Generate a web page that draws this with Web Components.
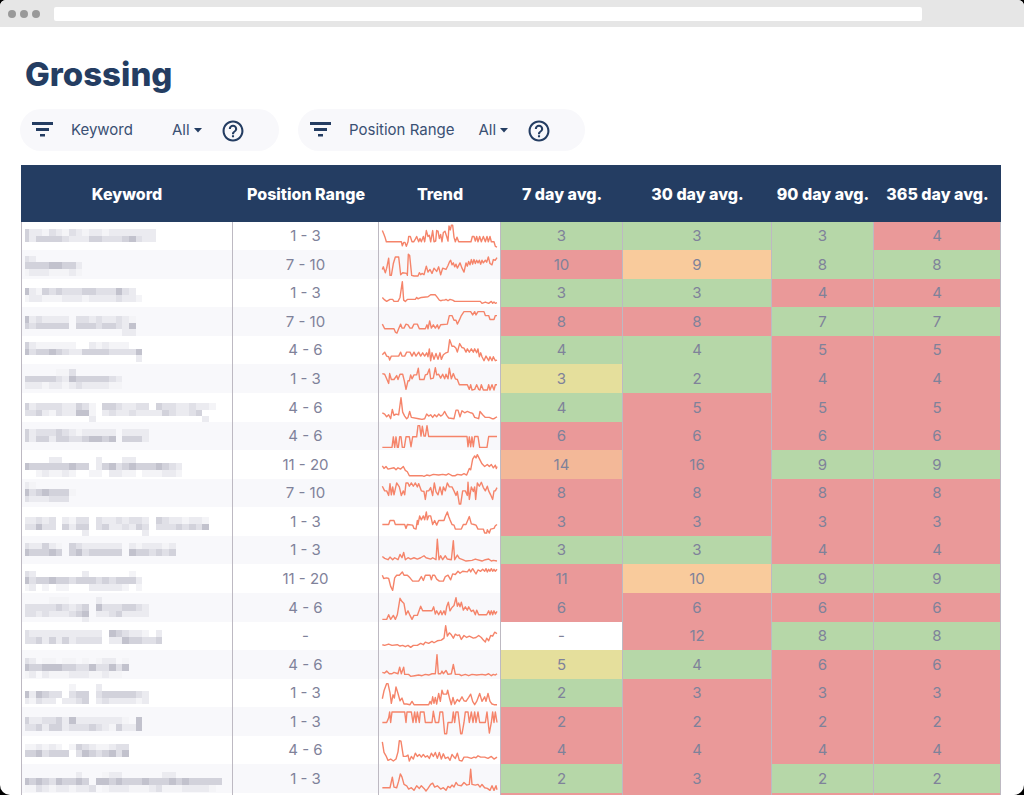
<!DOCTYPE html>
<html lang="en">
<head>
<meta charset="utf-8">
<meta name="viewport" content="width=device-width, initial-scale=1">
<title>Grossing</title>
<style>
  html, body { margin: 0; height: 100%; }
  body { background: #000; overflow: hidden; font-family: Inter, "Liberation Sans", sans-serif; color: #243d62; }
</style>
</head>
<body>
<browser-frame>
  <page-title>Grossing</page-title>
  <filter-bar>
    <filter-pill label="Keyword"></filter-pill>
    <filter-pill label="Position Range"></filter-pill>
  </filter-bar>
  <ranking-table></ranking-table>
</browser-frame>

<script>
class ShadowElement extends HTMLElement {
  connectedCallback() {
    if (!this.shadowRoot) this.attachShadow({ mode: "open" }).innerHTML = this.render();
  }
}

customElements.define("browser-frame", class extends ShadowElement {
  render() {
    return `<style>
      :host { display: flex; flex-direction: column; height: 100vh; overflow: hidden; background: #fff; border-radius: 6px 6px 10px 10px; }
      header { flex: none; display: flex; align-items: center; height: 27px; padding: 0 102px 0 8px; background: #e6e6e6; box-sizing: border-box; }
      .dots { display: flex; gap: 4px; margin-right: 14px; }
      i { width: 8px; height: 8px; border-radius: 50%; background: #999; }
      input { flex: 1; min-width: 0; height: 14px; padding: 0 6px; border: 0; border-radius: 2px; background: #fff; font: 10px Inter, sans-serif; box-sizing: border-box; outline: none; }
      main { flex: 1; min-height: 0; padding: 26px 23px 0 21px; }
    </style>
    <header><div class="dots"><i></i><i></i><i></i></div><input type="text" aria-label="Address"></header>
    <main><slot></slot></main>`;
  }
});

customElements.define("page-title", class extends ShadowElement {
  render() {
    return `<style>
      :host { display: block; padding-left: 4px; }
      h1 { margin: 0; font-size: 33px; line-height: 42px; font-weight: 800; }
    </style><h1><slot></slot></h1>`;
  }
});

customElements.define("filter-bar", class extends ShadowElement {
  render() {
    return `<style>
      :host { display: flex; flex-wrap: wrap; gap: 19px; margin: 14px 0 14px -1px; }
    </style><slot></slot>`;
  }
});

customElements.define("filter-pill", class extends ShadowElement {
  render() {
    const label = this.getAttribute("label");
    return `<style>
      :host { display: flex; align-items: center; height: 42px; padding: 0 35px 0 12px; border-radius: 21px; background: #f8f8fb; box-sizing: border-box; }
      svg { display: block; flex: none; }
      label { min-width: 77px; margin: 0 24px 0 18px; color: #3a5073; font-size: 15px; line-height: 20px; white-space: nowrap; }
      .pick { display: grid; align-items: center; width: 30px; margin-right: 20px; }
      .pick > * { grid-area: 1 / 1; }
      select { appearance: none; width: 100%; margin: 0; padding: 0; border: 0; background: none; color: #3a5073; font: 15px/20px Inter, sans-serif; }
      .caret { justify-self: end; pointer-events: none; }
      button { display: block; padding: 0; border: 0; background: none; color: inherit; margin-top: 2px; }
    </style>
    <svg width="21" height="16" viewBox="0 0 21 16" fill="currentColor" aria-hidden="true"><path d="M0 0h21v3H0zM4 6h13v3H4zM8 12h5v2.600H8z"/></svg>
    <label for="choice">${label}</label>
    <span class="pick">
      <select id="choice"><option>All</option></select>
      <svg class="caret" width="8" height="5" viewBox="0 0 8 5" fill="currentColor" aria-hidden="true"><path d="M0 0h8L4 4.500z"/></svg>
    </span>
    <button type="button" aria-label="Help for ${label}">
      <svg width="22" height="22" viewBox="1.500 1.500 21 21" fill="currentColor" aria-hidden="true"><path d="M11 18h2v-2h-2v2zm1-16C6.480 2 2 6.480 2 12s4.480 10 10 10 10-4.480 10-10S17.520 2 12 2zm0 18c-4.410 0-8-3.590-8-8s3.590-8 8-8 8 3.590 8 8-3.590 8-8 8zm0-14c-2.210 0-4 1.790-4 4h2c0-1.100.9-2 2-2s2 .9 2 2c0 2-3 1.750-3 5h2c0-2.250 3-2.500 3-5 0-2.210-1.790-4-4-4z"/></svg>
    </button>`;
  }
});

/* Keyword hidden behind a mosaic: each digit of a strip is one tile's darkness, 0 is empty. */
customElements.define("masked-keyword", class extends ShadowElement {
  render() {
    const shades = ["", "#f4f4f7", "#ebebf0", "#e0e0e7", "#d2d2db", "#c2c2cd"];
    const [top, ...strips] = this.getAttribute("tiles").split(",");
    let rects = "";
    strips.forEach((strip, row) => {
      [...strip].forEach((tone, col) => {
        if (tone === "0") return;
        const x = col ? 20 + col * 20 : 28;
        rects += `<rect x="${x}" y="${+top + row * 20}" width="${col ? 20 : 12}" height="20" fill="${shades[tone]}"/>`;
      });
    });
    return `<style>
      :host { display: block; overflow: hidden; }
      svg { display: block; margin-left: 3px; }
    </style><svg width="200" height="28" viewBox="28 0 600 84" shape-rendering="crispEdges" role="img" aria-label="Hidden keyword">${rects}</svg>`;
  }
});

customElements.define("trend-line", class extends ShadowElement {
  render() {
    return `<style>
      :host { display: block; }
      svg { display: block; width: 100%; height: 28px; }
      polyline { fill: none; stroke: #f5846a; stroke-linejoin: round; vector-effect: non-scaling-stroke; }
    </style><svg viewBox="21 ${this.getAttribute("top")} 363 85" preserveAspectRatio="none" role="img" aria-label="Trend"><polyline stroke-width="1.4" points="${this.getAttribute("points")}"/></svg>`;
  }
});

/* range | four averages | their colours (g green, r red, o orange, p peach, y yellow, w none) | mosaic | trend top | trend points */
const ROWS = [
["1 - 3","3 3 3 4","gggr","21,42213213212212222222,42444432224433345322",4,"31,30 36,42 39,50 43,64 88,64 91,76 95,66 99,66 103,78 108,64 110,48 115,48 120,64 125,64 130,56 134,48 140,64 144,54 148,64 154,48 158,64 163,30 168,48 172,44 176,64 182,30 186,64 191,62 194,30 198,32 202,54 206,42 210,64 214,36 219,32 224,48 228,62 231,16 235,28 238,14 242,14 246,50 250,64 255,50 260,64 297,64 301,48 306,48 310,62 314,48 318,64 323,48 328,64 334,48 340,64 345,48 349,64 354,48 358,64 366,64 370,78 375,80"],
["7 - 10","10 9 8 8","rogg","14,32,444455442,122211121",90,"31,146 34,138 37,148 40,156 44,142 50,112 54,164 58,164 64,128 70,108 80,108 86,162 92,156 104,158 106,164 109,100 113,104 119,164 126,166 138,166 142,156 146,162 150,158 156,162 163,136 168,154 174,146 180,158 186,142 194,152 200,138 206,162 212,142 222,146 228,134 232,124 236,118 240,132 244,126 248,138 252,130 256,142 264,126 270,142 276,154 282,126 286,136 290,122 294,132 298,116 302,130 306,116 310,128 314,118 318,126 322,118 326,130 330,118 334,126 340,118 344,124 349,108 354,128 360,132 364,116 370,118 375,110"],
["1 - 3","3 3 4 4","ggrr","28,52143433344333532,122111222122223221",176,"31,232 36,238 44,244 54,238 62,238 66,244 78,244 84,232 91,184 95,240 100,244 106,238 130,238 134,232 138,236 148,232 168,230 176,224 190,224 196,232 202,240 206,242 212,240 218,240 222,238 228,242 234,238 242,240 248,244 325,244 330,250 340,246 350,250 358,244 362,250 366,246 370,250 375,248"],
["7 - 10","8 8 7 7","rrgg","24,52322220332322321,43444440444344325,00000000000000022",261,"31,310 38,324 66,324 70,334 75,337 80,324 86,310 90,322 96,322 102,310 108,312 114,322 120,322 126,310 136,310 142,324 160,324 165,312 168,324 173,300 178,322 184,312 190,322 196,312 200,324 206,312 226,310 232,284 240,284 246,298 252,298 256,310 262,298 268,284 276,272 296,272 302,282 308,272 312,282 318,272 336,272 340,284 350,284 354,296 366,296 370,284 375,284"],
["4 - 6","4 4 5 5","ggrr","18,42111111002121110,534454322444433335,000000000000000002",347,"31,404 38,396 44,408 50,410 53,420 58,408 80,408 86,396 90,408 98,408 104,396 114,396 120,408 126,396 132,408 140,396 146,408 152,398 158,408 164,398 168,410 172,386 176,422 180,398 186,418 192,400 198,418 204,398 208,418 214,404 222,398 228,396 233,358 240,378 246,378 252,384 256,396 263,370 270,382 276,384 282,396 286,386 292,396 298,386 304,396 308,386 314,398 318,386 322,410 326,398 330,410 336,422 342,408 350,422 354,410 360,422 364,410 370,422 375,420"],
["1 - 3","3 2 4 4","ygrr","12,00000113,444443254444432,222122123222211",12,"31,38 38,40 44,54 50,68 53,38 58,56 66,56 74,44 78,56 84,40 92,40 97,60 102,86 108,60 112,60 116,42 120,54 126,42 134,42 139,22 143,56 156,56 160,42 166,40 172,24 176,54 184,52 190,20 194,42 200,40 206,52 212,40 218,54 222,40 228,54 232,22 238,54 244,38 250,54 256,56 262,72 286,72 292,86 296,72 300,88 308,86 314,72 320,86 324,88 328,72 334,88 346,88 350,72 354,88 360,72 366,88 370,72 375,72"],
["4 - 6","4 5 5 5","grrr","27,42333322431044322330433223221,3342132255102322322224322340,0000000000200000000000000002",97,"31,154 38,158 44,166 50,160 56,172 61,144 66,162 72,158 80,160 87,108 92,152 98,164 104,172 108,168 113,150 118,168 140,172 150,174 158,172 164,158 170,164 176,160 182,168 188,160 194,166 200,158 206,164 212,160 218,150 224,162 230,170 246,172 252,146 258,146 264,166 270,148 278,154 286,150 296,154 302,156 308,168 320,172 324,150 332,160 340,168 352,168 360,172 366,172 375,166"],
["4 - 6","6 6 6 6","rrrr","21,4233343212222202222,4244244334554504442",183,"31,260 60,260 64,228 68,260 72,228 76,260 79,260 83,228 87,228 91,260 97,260 102,228 112,228 117,258 122,228 134,228 138,194 143,194 147,226 151,196 156,226 160,226 165,194 170,227 285,227 288,258 292,228 296,258 300,228 304,258 308,227 318,227 323,260 345,260 350,227 375,227"],
["11 - 20","14 16 9 9","prgg","17,00002200000200022,544444454402453454445432,001211210011022110111221",269,"31,314 36,322 42,316 48,324 66,320 72,326 78,320 86,324 94,316 100,328 106,332 112,344 150,344 156,346 164,342 174,344 184,340 200,342 212,340 222,342 230,338 240,344 250,344 256,340 268,342 276,338 284,342 292,322 296,326 302,294 308,284 312,290 316,280 322,292 330,308 338,316 346,310 352,316 358,310 364,320 370,312 373,322 375,316"],
["7 - 10","8 8 8 8","rrrr","10,21,53454441,3222333",354,"31,376 38,390 44,390 50,404 54,368 58,402 62,378 66,402 74,366 82,378 88,404 94,390 98,402 102,366 108,366 112,376 118,366 124,376 130,366 136,378 140,368 148,390 156,392 160,416 164,390 170,390 176,380 182,404 187,366 192,392 198,402 204,378 210,402 214,378 220,390 226,366 232,378 240,378 246,390 252,404 256,392 262,430 266,430 272,390 280,390 286,404 288,364 292,416 298,378 304,392 308,378 311,416 316,366 322,376 328,364 334,380 340,390 346,376 350,390 356,402 362,416 366,390 370,390 375,380"],
["1 - 3","3 3 3 3","rrrr","27,2232302133032232332043221221,3353304244034223243033343435,0000000002000000002",20,"31,70 50,70 54,58 66,58 70,70 98,70 102,82 106,70 122,72 126,82 132,84 136,58 138,70 143,44 148,56 154,44 158,56 163,32 166,56 170,44 176,44 182,70 188,58 194,72 200,58 216,58 220,46 226,32 230,46 234,56 240,70 246,72 250,84 268,84 274,70 282,70 292,46 298,68 306,70 312,72 318,84 334,84 338,96 344,96 346,86 352,96 356,84 366,82 370,74 375,70"],
["1 - 3","3 3 4 4","ggrr","20,32242104322222202122212,54445404534444405443434",106,"31,168 38,174 48,178 54,170 62,178 68,172 78,178 84,162 90,172 95,156 100,178 108,172 116,176 126,172 136,176 146,172 156,166 162,172 176,176 182,172 192,178 196,116 201,178 206,166 212,178 220,166 226,176 238,178 244,120 248,178 256,164 262,174 272,178 282,182 300,180 310,176 330,182 340,178 350,176 358,182 364,180 375,182"],
["11 - 20","11 10 9 9","rogg","17,32000000020000001,534454434443434442,120101100022222101",191,"31,222 35,232 44,230 50,232 56,256 62,268 68,230 74,222 82,222 91,212 96,222 106,222 114,230 122,240 140,240 148,226 154,238 160,222 174,222 178,236 182,222 188,222 194,234 202,240 214,240 220,226 228,222 236,236 242,218 250,220 258,210 264,216 272,210 286,212 292,204 296,212 302,202 308,212 312,218 318,206 326,210 332,204 338,210 342,202 346,212 350,204 354,210 358,202 362,210 366,204 370,210 375,204"],
["4 - 6","6 6 6 6","rrrr","10,00001110000200,3333343234053334432,3323222345022342222,0000000002",277,"31,354 44,354 50,340 56,354 64,342 70,354 76,340 84,290 90,300 96,306 102,340 108,328 114,342 120,354 126,342 136,342 146,314 152,328 180,328 185,316 190,338 194,328 200,340 206,328 210,340 216,328 220,340 224,316 229,302 234,328 240,318 246,312 252,288 256,314 260,304 264,316 268,302 274,326 280,316 286,326 290,316 298,330 304,326 310,340 314,326 320,340 344,340 350,328 354,340 358,328 362,340 366,328 370,338 375,330"],
["-","- 12 8 8","wrgg","25,322222222222054322102,334242423333022544334",363,"31,432 38,434 50,430 60,434 76,432 84,436 92,434 100,438 108,434 116,440 124,434 136,434 146,428 154,432 160,424 170,428 180,422 186,426 196,420 208,418 216,412 221,374 226,406 232,396 238,402 244,412 250,400 256,404 262,402 268,416 276,404 284,410 292,406 304,412 312,410 320,404 328,410 334,418 340,424 344,412 350,420 356,404 362,406 368,394 375,398"],
["4 - 6","5 4 6 6","ygrr","20,32011011010122010,54455544335335350,120211122211211",13,"31,78 38,80 44,74 52,82 60,82 66,78 78,82 83,62 88,82 95,62 98,84 110,84 116,90 128,88 140,86 150,88 160,84 170,86 180,82 190,82 195,24 199,82 206,82 210,74 214,82 222,72 228,84 238,82 244,54 250,84 262,84 268,88 280,84 290,88 300,84 314,86 330,84 340,86 350,82 358,88 364,84 370,86 375,82"],
["1 - 3","2 3 3 3","grrr","16,000000010002,5254330344034444432,2132202234023222212",98,"31,158 36,134 44,112 48,112 54,140 58,172 63,146 67,156 72,122 78,142 84,164 90,156 96,174 104,174 114,176 120,166 126,176 170,176 174,166 178,174 182,152 186,172 190,154 194,174 200,142 205,166 210,132 214,144 224,144 227,132 232,154 238,176 243,154 248,174 256,160 262,166 270,152 276,164 282,166 290,154 296,144 302,166 308,176 314,166 323,142 330,166 338,152 342,166 348,142 354,166 360,174 366,176 375,176"],
["1 - 3","2 2 2 2","rrrr","28,422334252222222105,334244233343214225",184,"31,228 44,228 50,214 53,196 56,228 60,196 98,196 102,228 105,196 118,196 123,228 128,196 132,228 136,196 142,228 145,196 156,196 160,228 180,228 184,194 190,228 200,228 204,196 212,196 218,262 224,262 228,228 240,228 244,196 248,228 252,196 258,196 262,228 266,262 270,262 276,228 280,196 288,196 292,228 298,196 303,228 308,196 312,228 318,196 323,228 340,228 345,196 352,260 358,228 362,196 366,228 370,196 375,228"],
["4 - 6","4 4 4 4","rrrr","23,1121210143211233,4453444035434535",270,"31,288 36,320 42,330 48,344 56,340 64,346 72,340 78,318 82,284 87,286 94,332 102,332 108,328 112,346 118,332 124,340 130,322 136,332 142,326 148,334 154,326 160,334 166,330 172,338 178,322 184,332 190,320 196,338 202,320 208,340 214,324 220,338 228,334 234,344 240,326 246,334 250,338 256,322 262,344 270,346 276,334 286,334 298,338 306,334 312,336 318,330 326,334 338,334 348,338 358,332 366,340 375,334"],
["1 - 3","2 3 2 2","grgg","20,00000000200012200000022,545435445405545444544454544444,113212212230122211123111222210",355,"31,424 54,424 61,392 66,422 74,424 80,404 85,382 90,392 96,414 104,418 110,428 118,424 126,432 134,418 142,426 148,418 156,426 162,434 168,426 176,414 182,410 188,422 196,418 206,428 214,424 222,432 228,420 234,424 240,416 246,422 252,408 258,416 268,418 276,408 284,416 292,414 296,368 300,414 310,416 318,414 324,422 330,414 338,424 346,426 354,432 360,418 366,432 372,418 375,430"]
];

customElements.define("ranking-table", class extends ShadowElement {
  render() {
    const heads = ["Keyword", "Position Range", "Trend", "7 day avg.", "30 day avg.", "90 day avg.", "365 day avg."];
    const widths = [212, 146, 122, 122, 149, 102, 127];
    const body = ROWS.map(([range, values, tones, tiles, top, points]) => `<tr>
      <td><masked-keyword tiles="${tiles}"></masked-keyword></td><td>${range}</td>
      <td><trend-line top="${top}" points="${points}"></trend-line></td>
      ${values.split(" ").map((v, i) => `<td class="${tones[i]}">${v}</td>`).join("")}</tr>`).join("");
    return `<style>
      :host { display: block; }
      table { width: 100%; table-layout: fixed; border-collapse: separate; border-spacing: 0; text-align: center; }
      th { height: 57px; padding: 0; background: #243d62; color: #fff; font-size: 16px; line-height: 20px; font-weight: 800; white-space: nowrap; }
      td { height: 29px; padding: 0; border-right: 1px solid #bdb9c2; color: #7f829a; font-size: 15px; line-height: 20px; box-sizing: border-box; }
      td:first-child { border-left: 1px solid #bdb9c2; }
      tr:nth-child(7n + 1) td, tr:nth-child(7n + 3) td, tr:nth-child(7n + 5) td { height: 28px; }
      tbody tr:nth-child(even) { background: #f8f8fb; }
      td.g { background: #b6d7a8; } td.r { background: #ea9999; } td.o { background: #f9cb9c; }
      td.p { background: #f3b898; } td.y { background: #e5df9c; } td.w { background: #fff; }
    </style>
    <table>
      <colgroup>${widths.map(w => `<col style="width:${w}px">`).join("")}</colgroup>
      <thead><tr>${heads.map(h => `<th scope="col">${h}</th>`).join("")}</tr></thead>
      <tbody>${body}<tr><td></td><td></td><td></td><td class="r"></td><td class="r"></td><td class="r"></td><td class="r"></td></tr></tbody>
    </table>`;
  }
});
</script>
</body>
</html>
